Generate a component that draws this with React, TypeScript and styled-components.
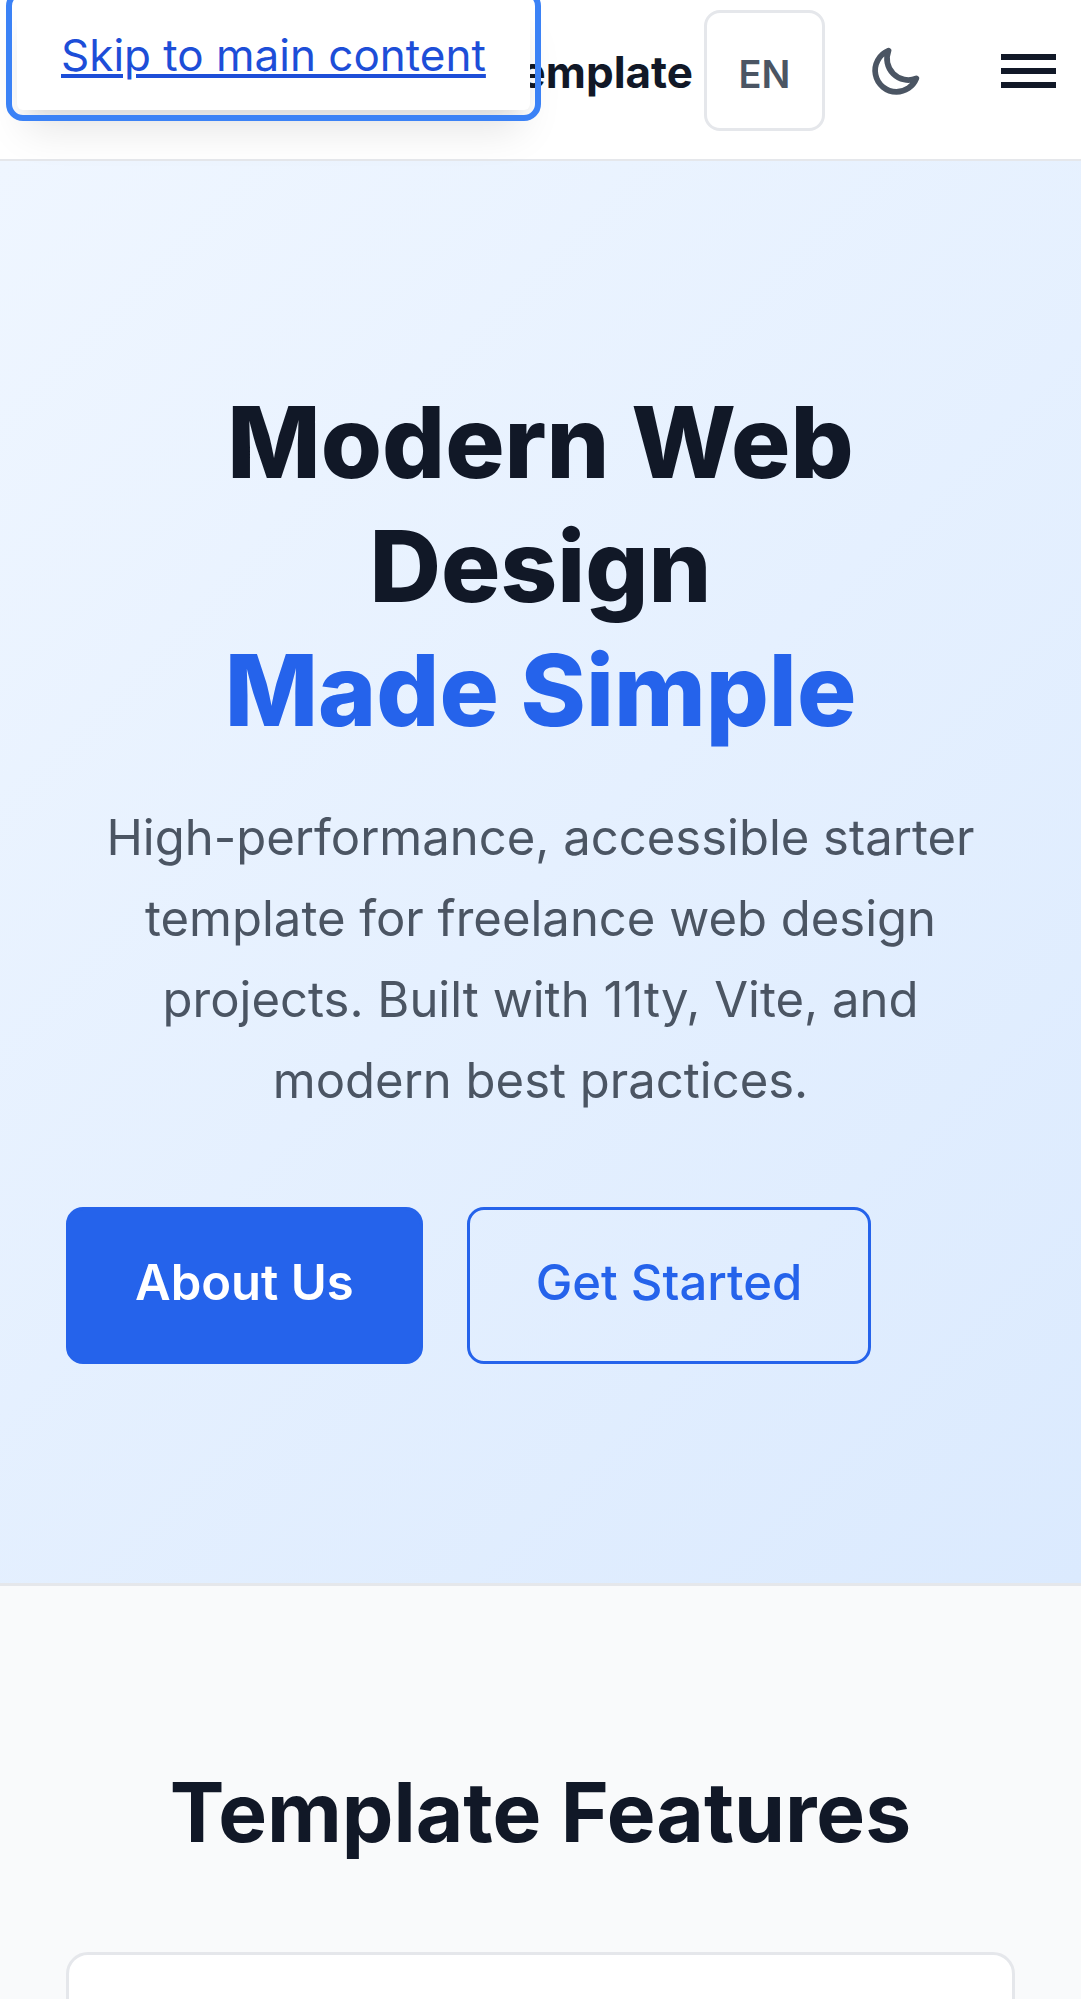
import React from 'react';
import styled, { createGlobalStyle } from 'styled-components';

const color = {
  ink: '#111827',
  muted: '#4b5563',
  line: '#e5e7eb',
  primary: '#2563eb',
  primaryDark: '#1d4ed8',
  focus: '#3b82f6',
  surface: '#f9fafb',
};

const GlobalStyle = createGlobalStyle`
  *, *::before, *::after { box-sizing: border-box; }
  body {
    margin: 0;
    background: #ffffff;
    color: ${color.ink};
    font-family: Inter, 'Liberation Sans', sans-serif;
    font-size: 44px;
    line-height: 66px;
  }
  h1, h2, p { margin: 0; }
`;

const Page = styled.div`
  display: flex;
  flex-direction: column;
  max-height: 100vh;
  overflow: hidden;
`;

const SkipLink = styled.a`
  position: absolute;
  top: 0;
  left: 17px;
  z-index: 10;
  padding: 22px 44px;
  border-radius: 6px;
  background: #ffffff;
  color: ${color.primaryDark};
  outline: 6px solid ${color.focus};
  outline-offset: 5px;
  box-shadow: 0 28px 42px -8px rgba(0, 0, 0, 0.1), 0 11px 17px -11px rgba(0, 0, 0, 0.1);
`;

const Header = styled.header`
  display: flex;
  flex-shrink: 0;
  align-items: center;
  justify-content: flex-end;
  padding: 10px 25px 28px;
  border-bottom: 2px solid ${color.line};
`;

const Brand = styled.a`
  margin-right: 11px;
  padding-top: 2px;
  color: ${color.ink};
  font-weight: 700;
  text-decoration: none;
`;

const LanguageButton = styled.button`
  width: 121px;
  height: 121px;
  padding: 6px 0 0;
  border: 3px solid ${color.line};
  border-radius: 16px;
  background: #ffffff;
  color: ${color.muted};
  font: 600 38px/56px Inter, 'Liberation Sans', sans-serif;
`;

const IconButton = styled.button`
  display: flex;
  align-items: center;
  justify-content: center;
  padding: 0;
  border: 0;
  background: transparent;
  color: ${(p) => p.color};
`;

const ThemeButton = styled(IconButton)`
  width: 122px;
  height: 121px;
  margin: 0 44px 0 10px;
`;

const Hero = styled.section`
  flex-shrink: 0;
  padding: 219px 66px;
  border-bottom: 3px solid ${color.line};
  background: linear-gradient(135deg, #eff6ff 0%, #dbeafe 100%);
`;

const HeroTitle = styled.h1`
  font-size: 99px;
  font-weight: 800;
  line-height: 124px;
  text-align: center;
`;

const Accent = styled.span`
  display: block;
  color: ${color.primary};
`;

const Lead = styled.p`
  margin-top: 45px;
  padding: 0 22px;
  color: ${color.muted};
  font-size: 49px;
  line-height: 81px;
  text-align: center;
`;

const Actions = styled.div`
  display: flex;
  gap: 44px;
  margin-top: 86px;
`;

const ActionLink = styled.a<{ $filled?: boolean }>`
  padding: 33px 66px 39px;
  border: 3px solid ${color.primary};
  border-radius: 17px;
  background: ${(p) => (p.$filled ? color.primary : 'transparent')};
  color: ${(p) => (p.$filled ? '#ffffff' : color.primary)};
  font-size: 49px;
  font-weight: ${(p) => (p.$filled ? 600 : 500)};
  line-height: 79px;
  text-decoration: none;
`;

const Features = styled.section`
  padding: 177px 66px;
  background: ${color.surface};
`;

const FeaturesTitle = styled.h2`
  font-size: 82px;
  font-weight: 700;
  line-height: 100px;
  text-align: center;
`;

const Card = styled.article`
  min-height: 400px;
  margin-top: 89px;
  border: 3px solid ${color.line};
  border-radius: 22px;
  background: #ffffff;
`;

export default function App() {
  return (
    <Page>
      <GlobalStyle />
      <SkipLink href="#main">Skip to main content</SkipLink>
      <Header>
        <Brand href="#home">Template</Brand>
        <LanguageButton type="button">EN</LanguageButton>
        <ThemeButton type="button" color={color.muted} aria-label="Toggle dark mode">
          <svg width="57" height="57" viewBox="0 0 24 24" fill="none" stroke="currentColor" strokeWidth="2.4" strokeLinecap="round" strokeLinejoin="round">
            <path d="M20.354 15.354A9 9 0 018.646 3.646 9.003 9.003 0 0012 21a9.003 9.003 0 008.354-5.646z" />
          </svg>
        </ThemeButton>
        <IconButton type="button" color={color.ink} aria-label="Open menu">
          <svg width="55" height="34" viewBox="0 0 55 34" fill="currentColor">
            <rect width="55" height="6" />
            <rect y="14" width="55" height="6" />
            <rect y="28" width="55" height="6" />
          </svg>
        </IconButton>
      </Header>
      <main id="main">
        <Hero>
          <HeroTitle>
            Modern Web Design <Accent>Made Simple</Accent>
          </HeroTitle>
          <Lead>
            High-performance, accessible starter template for freelance web design projects. Built with 11ty, Vite, and modern best practices.
          </Lead>
          <Actions>
            <ActionLink href="#about" $filled>About Us</ActionLink>
            <ActionLink href="#start">Get Started</ActionLink>
          </Actions>
        </Hero>
        <Features>
          <FeaturesTitle>Template Features</FeaturesTitle>
          <Card />
        </Features>
      </main>
    </Page>
  );
}
